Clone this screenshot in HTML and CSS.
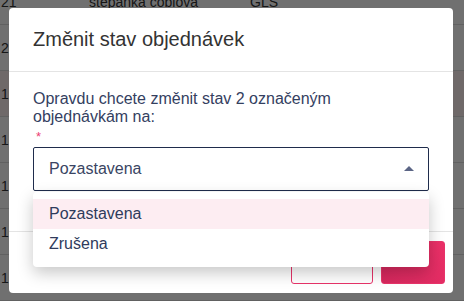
FILE: index.html
```html
<!DOCTYPE html>
<html lang="cs">
<head>
    <meta charset="UTF-8">
    <meta name="viewport" content="width=device-width, initial-scale=1.0">
    <title>Změnit stav objednávek</title>
    <link rel="stylesheet" href="styles.css">
</head>
<body>
    <div class="orders">
        <div class="order-row"><span class="col-id">21</span><span class="col-name">štěpánka coblova</span><span class="col-carrier">GLS</span></div>
        <div class="order-row"><span class="col-id">22</span></div>
        <div class="order-row order-row-selected"><span class="col-id">19</span></div>
        <div class="order-row"><span class="col-id">18</span></div>
        <div class="order-row"><span class="col-id">17</span></div>
        <div class="order-row"><span class="col-id">16</span></div>
        <div class="order-row"><span class="col-id">15</span></div>
    </div>

    <div class="overlay"></div>

    <div class="modal">
        <div class="modal-header">
            <h2>Změnit stav objednávek</h2>
        </div>
        <div class="modal-body">
            <p>Opravdu chcete změnit stav 2 označeným objednávkám na:</p>
            <div class="required">*</div>
            <div class="select">
                <span>Pozastavena</span>
                <span class="caret"></span>
            </div>
        </div>
        <div class="modal-footer">
            <button class="btn btn-outline"></button>
            <button class="btn btn-primary"></button>
        </div>

        <ul class="dropdown">
            <li class="active">Pozastavena</li>
            <li>Zrušena</li>
        </ul>
    </div>
</body>
</html>
```

FILE: styles.css
```css
body {
    font-family: 'Liberation Sans', Arial, sans-serif;
    background-color: #ffffff;
    color: #333;
    margin: 0;
    padding: 0;
    overflow: hidden;
}

.orders {
    margin-top: -21px;
}

.order-row {
    display: flex;
    align-items: center;
    height: 45px;
    border-bottom: 1px solid #dedede;
    font-size: 14px;
    color: #333;
}

.order-row-selected {
    background: #fdf0f0;
}

.col-id {
    width: 88px;
    padding-left: 1px;
}

.col-name {
    width: 161px;
}

.overlay {
    position: fixed;
    inset: 0;
    background: rgba(0, 0, 0, 0.56);
}

.modal {
    position: fixed;
    top: 8px;
    left: 9px;
    width: 444px;
    height: 285px;
    background: #fff;
    border-radius: 4px;
    display: flex;
    flex-direction: column;
}

.modal-header {
    height: 63px;
    border-bottom: 1px solid #e4e4e4;
    display: flex;
    align-items: center;
    padding: 0 24px;
}

.modal-header h2 {
    margin: 0;
    font-size: 20px;
    font-weight: normal;
    color: #333;
}

.modal-body {
    flex: 1;
    padding: 18px 24px 0;
    color: #34405f;
}

.modal-body p {
    margin: 0;
    font-size: 16px;
    line-height: 18px;
}

.required {
    color: #ec3e74;
    font-size: 13px;
    line-height: 16px;
    margin: 3px 0 2px 3px;
}

.select {
    height: 42px;
    border: 1px solid #1f2c4c;
    border-radius: 2px;
    display: flex;
    align-items: center;
    justify-content: space-between;
    padding: 0 14px 0 15px;
    font-size: 16px;
    color: #3a4563;
}

.caret {
    width: 0;
    height: 0;
    border-left: 5px solid transparent;
    border-right: 5px solid transparent;
    border-bottom: 5px solid #5b6585;
    margin-top: -1px;
}

.modal-footer {
    height: 43px;
    border-top: 1px solid #e4e4e4;
    padding: 9px 8px 9px;
    display: flex;
    justify-content: flex-end;
    gap: 8px;
}

.btn {
    border-radius: 3px;
    border: 1px solid #e8336a;
    padding: 0;
    cursor: pointer;
}

.btn-outline {
    width: 82px;
    background: #fff;
}

.btn-primary {
    width: 64px;
    background: linear-gradient(45deg, #d6285d, #ec3068);
}

.dropdown {
    position: absolute;
    top: 184px;
    left: 24px;
    width: 396px;
    margin: 0;
    padding: 7px 0 8px;
    list-style: none;
    background: #fff;
    border-radius: 4px;
    box-shadow: 0 6px 16px rgba(0, 0, 0, 0.22);
}

.dropdown li {
    height: 30px;
    line-height: 30px;
    padding-left: 16px;
    font-size: 16px;
    color: #2f3b5c;
}

.dropdown li.active {
    background: #fdedf2;
}
```
